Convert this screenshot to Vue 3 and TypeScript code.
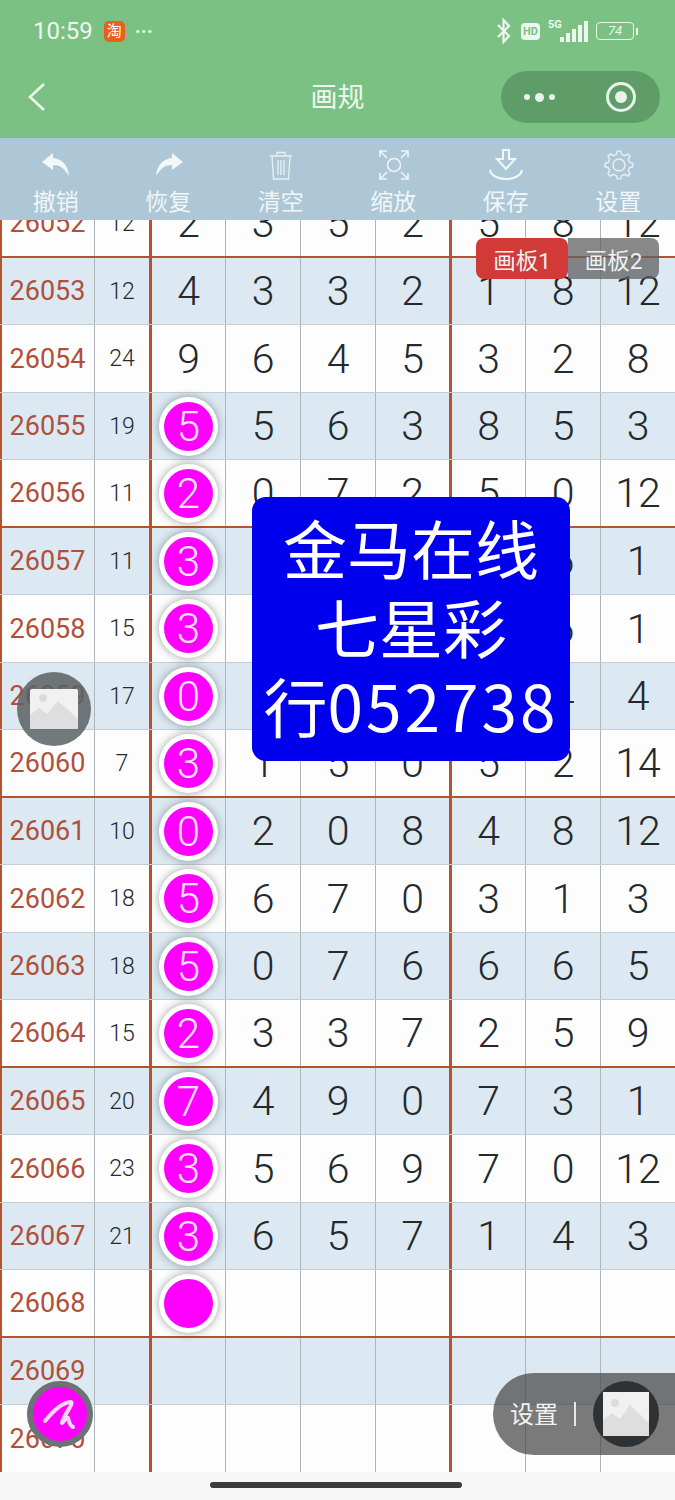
<template>
  <div class="page">
    <header class="top">
      <div class="status">
        <span class="time">10:59</span>
        <span class="tao">淘</span>
        <span class="more">···</span>
        <div class="status-right">
          <svg class="bt" width="16" height="26" viewBox="0 0 16 26" fill="none" stroke="#eef7ef" stroke-width="2.2">
            <path d="M2 7l11 11-5.5 6V2L13 8 2 19" />
          </svg>
          <span class="hd">HD</span>
          <span class="five">5G</span>
          <span class="bars">
            <i v-for="h in signal" :key="h" :style="{ height: h + 'px' }"></i>
          </span>
          <span class="battery">74</span>
          <span class="nub"></span>
        </div>
      </div>
      <div class="nav">
        <svg class="back" width="20" height="30" viewBox="0 0 20 30" fill="none" stroke="#eef7ef" stroke-width="2.6">
          <path d="M17 2L3 15l14 13" />
        </svg>
        <span class="title">画规</span>
        <div class="capsule">
          <span class="dots"><i></i><i class="big"></i><i></i></span>
          <span class="target"><i></i></span>
        </div>
      </div>
    </header>

    <nav class="tools">
      <div class="tool">
        <svg width="30" height="30" viewBox="0 0 30 30" fill="#f2f7fa">
          <path d="M12 3L1 12l11 8v-5c7 0 11 3 16 11-1-11-7-17-16-18z" />
        </svg>
        <span>撤销</span>
      </div>
      <div class="tool">
        <svg width="30" height="30" viewBox="0 0 30 30" fill="#f2f7fa">
          <path d="M18 3l11 9-11 8v-5c-7 0-11 3-16 11 1-11 7-17 16-18z" />
        </svg>
        <span>恢复</span>
      </div>
      <div class="tool">
        <svg width="30" height="30" viewBox="0 0 30 30" fill="none" stroke="#e9f1f5" stroke-width="1.3">
          <path d="M4 6h22M11 6V2.500h8V6M6 6l1.500 23h15L24 6M12 10v15M15 10v15M18 10v15" />
        </svg>
        <span>清空</span>
      </div>
      <div class="tool">
        <svg width="30" height="30" viewBox="0 0 30 30" fill="none" stroke="#eef4f7" stroke-width="1.6">
          <circle cx="15" cy="15" r="6.500" />
          <path d="M1 7V1h7M1 1l7 7M29 7V1h-7M29 1l-7 7M1 23v6h7M1 29l7-7M29 23v6h-7M29 29l-7-7" />
        </svg>
        <span>缩放</span>
      </div>
      <div class="tool">
        <svg width="36" height="32" viewBox="0 0 36 32" fill="none" stroke="#f2f7fa" stroke-width="2">
          <path d="M15 1h6v9h6l-9 10-9-10h6zM2 21c2 12 30 12 32 0" />
        </svg>
        <span>保存</span>
      </div>
      <div class="tool">
        <svg width="30" height="30" viewBox="0 0 30 30" fill="none" stroke="#e9f1f5" stroke-width="1.4">
          <path :d="gear" />
          <circle cx="15" cy="15" r="6" />
        </svg>
        <span>设置</span>
      </div>
    </nav>

    <main class="sheet">
      <div class="table">
        <div
          v-for="(row, i) in rows"
          :key="row.id"
          class="row"
          :class="{ tint: i % 2 === 1, heavy: i % 4 === 0 }"
        >
          <div class="cell issue">{{ row.id }}</div>
          <div class="cell sum">{{ row.sum }}</div>
          <div class="cell num">
            <span v-if="row.ball !== null" class="ball">{{ row.ball }}</span>
            <template v-else>{{ row.first }}</template>
          </div>
          <div
            v-for="(n, j) in row.nums"
            :key="j"
            class="cell num"
            :class="{ split: j === 2 }"
          >{{ n }}</div>
        </div>
      </div>
    </main>

    <footer class="foot"><i></i></footer>

    <!-- floating stuff over the sheet -->
    <div class="tabs">
      <span class="tab on">画板1</span>
      <span class="tab">画板2</span>
    </div>

    <div class="notice">
      <div>金马在线</div>
      <div>七星彩</div>
      <div>行<span class="code">052738</span></div>
    </div>

    <div class="float-pic">
      <svg width="48" height="40" viewBox="0 0 48 40">
        <rect width="48" height="40" rx="2" fill="#f1f1f1" />
        <path d="M0 40V26l9-7 8 6 11-13 20 18v10z" fill="#dedede" />
        <circle cx="13" cy="9" r="4" fill="#dcdcdc" />
      </svg>
    </div>

    <div class="float-pen">
      <svg width="40" height="40" viewBox="0 0 40 40" fill="none" stroke="#f7d9f7" stroke-width="4" stroke-linecap="round" stroke-linejoin="round">
        <path d="M5 27C14 16 24 8 31 8c3 2-7 12-9 21 2-1 4-7 6-5 1 4 2 8 5 9" />
      </svg>
    </div>

    <div class="float-set">
      <span class="set-label">设置</span>
      <span class="set-bar"></span>
      <span class="set-pic">
        <svg width="46" height="44" viewBox="0 0 46 44">
          <rect width="46" height="44" fill="#f1f1f1" />
          <path d="M0 44V28l9-7 8 6 10-14 19 18v13z" fill="#dedede" />
          <circle cx="12" cy="11" r="4" fill="#dcdcdc" />
        </svg>
      </span>
    </div>
  </div>
</template>

<script setup lang="ts">
interface Row {
  id: number;
  sum: number | string;
  first: number | string;
  ball: number | string | null;
  nums: (number | string)[];
}

const signal = [5, 9, 13, 17, 21];

function makeRow(id: number, sum: number | string, first: number | string, ball: number | string | null, nums: (number | string)[]): Row {
  return { id, sum, first, ball, nums };
}

const blank = ["", "", "", "", "", ""];

const rows: Row[] = [
  makeRow(26052, 12, 2, null, [3, 5, 2, 5, 8, 12]),
  makeRow(26053, 12, 4, null, [3, 3, 2, 1, 8, 12]),
  makeRow(26054, 24, 9, null, [6, 4, 5, 3, 2, 8]),
  makeRow(26055, 19, "", 5, [5, 6, 3, 8, 5, 3]),
  makeRow(26056, 11, "", 2, [0, 7, 2, 5, 0, 12]),
  makeRow(26057, 11, "", 3, [4, 2, 9, 3, 6, 1]),
  makeRow(26058, 15, "", 3, [1, 8, 4, 7, 6, 1]),
  makeRow(26059, 17, "", 0, [2, 5, 7, 1, 4, 4]),
  makeRow(26060, 7, "", 3, [1, 5, 0, 5, 2, 14]),
  makeRow(26061, 10, "", 0, [2, 0, 8, 4, 8, 12]),
  makeRow(26062, 18, "", 5, [6, 7, 0, 3, 1, 3]),
  makeRow(26063, 18, "", 5, [0, 7, 6, 6, 6, 5]),
  makeRow(26064, 15, "", 2, [3, 3, 7, 2, 5, 9]),
  makeRow(26065, 20, "", 7, [4, 9, 0, 7, 3, 1]),
  makeRow(26066, 23, "", 3, [5, 6, 9, 7, 0, 12]),
  makeRow(26067, 21, "", 3, [6, 5, 7, 1, 4, 3]),
  makeRow(26068, "", "", "", blank),
  makeRow(26069, "", "", null, blank),
  makeRow(26070, "", "", null, blank),
];

// 齿轮外圈
function gearPath(teeth: number, outer: number, inner: number) {
  const pts: string[] = [];
  const step = (Math.PI * 2) / teeth;
  for (let t = 0; t < teeth; t++) {
    const a = t * step - Math.PI / 2;
    const corners: [number, number][] = [
      [a - step * 0.3, inner],
      [a - step * 0.16, outer],
      [a + step * 0.16, outer],
      [a + step * 0.3, inner],
    ];
    for (const [ang, r] of corners) {
      pts.push(`${(15 + Math.cos(ang) * r).toFixed(2)} ${(15 + Math.sin(ang) * r).toFixed(2)}`);
    }
  }
  return `M${pts.join("L")}Z`;
}

const gear = gearPath(8, 14, 11);
</script>

<style>
html,
body {
  margin: 0;
  background: #f7f7f7;
}
</style>

<style scoped>
.page {
  position: relative;
  width: 675px;
  height: 1500px;
  overflow: hidden;
  display: flex;
  flex-direction: column;
  font-family: Roboto, "Noto Sans CJK SC", sans-serif;
  background: #f7f7f7;
}

.top {
  height: 138px;
  flex: none;
  background: #7bc184;
  color: #eef7ef;
}
.status {
  height: 62px;
  display: flex;
  align-items: center;
  padding-left: 33px;
  padding-right: 37px;
}
.time {
  font-size: 24px;
}
.tao {
  margin-left: 11px;
  width: 21px;
  height: 21px;
  border-radius: 5px;
  background: #e8601c;
  color: #fff;
  font-size: 15px;
  line-height: 21px;
  text-align: center;
}
.more {
  margin-left: 10px;
  font-size: 20px;
  font-weight: 700;
}
.status-right {
  margin-left: auto;
  display: flex;
  align-items: center;
}
.hd {
  margin-left: 9px;
  width: 19px;
  height: 17px;
  border-radius: 4px;
  background: #eef7ef;
  color: #7bc184;
  font-size: 11px;
  font-weight: 700;
  line-height: 17px;
  text-align: center;
}
.five {
  margin-left: 8px;
  margin-top: -14px;
  width: 12px;
  font-size: 11px;
  font-weight: 700;
  white-space: nowrap;
}
.bars {
  display: flex;
  align-items: flex-end;
  gap: 2px;
  height: 21px;
}
.bars i {
  display: block;
  width: 4px;
  background: #eef7ef;
}
.battery {
  margin-left: 8px;
  width: 36px;
  height: 16px;
  border: 1.500px solid #eef7ef;
  border-radius: 4px;
  font-size: 13px;
  font-style: italic;
  line-height: 16px;
  text-align: center;
}
.nub {
  margin-left: 2px;
  width: 2px;
  height: 7px;
  background: #eef7ef;
}

.nav {
  height: 76px;
  display: flex;
  align-items: center;
  position: relative;
  padding-left: 27px;
  padding-right: 15px;
}
.back {
  margin-top: -6px;
}
.title {
  position: absolute;
  left: 0;
  right: 0;
  top: 16px;
  text-align: center;
  font-size: 27px;
  line-height: 40px;
}
.capsule {
  margin-left: auto;
  margin-top: -6px;
  width: 159px;
  height: 52px;
  border-radius: 26px;
  background: #5f9d68;
  display: flex;
  align-items: center;
}
.dots {
  margin-left: 23px;
  display: flex;
  align-items: center;
  gap: 5px;
}
.dots i {
  display: block;
  width: 6px;
  height: 6px;
  border-radius: 50%;
  background: #e8f4e9;
}
.dots i.big {
  width: 9px;
  height: 9px;
}
.target {
  margin-left: auto;
  margin-right: 24px;
  width: 30px;
  height: 30px;
  box-sizing: border-box;
  border: 3px solid #e8f4e9;
  border-radius: 50%;
  display: flex;
  align-items: center;
  justify-content: center;
}
.target i {
  display: block;
  width: 12px;
  height: 12px;
  border-radius: 50%;
  background: #e8f4e9;
}

.tools {
  height: 82px;
  flex: none;
  background: #adc7d6;
  display: grid;
  grid-template-columns: repeat(6, 112.500px);
  position: relative;
  z-index: 1;
}
.tool {
  display: flex;
  flex-direction: column;
  align-items: center;
  padding-top: 11px;
  color: #f1f6f8;
  font-size: 23px;
}
.tool svg {
  height: 32px;
}
.tool span {
  margin-top: 5px;
  margin-right: 1px;
  line-height: 34px;
}

.sheet {
  height: 1252px;
  flex: none;
  overflow: hidden;
}
.table {
  margin-top: -30px;
  background: #fdfdfd;
}
.row {
  height: 67.500px;
  box-sizing: border-box;
  display: grid;
  grid-template-columns: 95px 57px 74px 75px 75px 76px 74px 75px 75px;
  border-bottom: 1px solid #c3cdd3;
  background: #fdfdfd;
}
.row.tint {
  background: #dce9f2;
}
.row.heavy {
  border-bottom: 2px solid #b5532f;
}
.cell {
  box-sizing: border-box;
  display: flex;
  align-items: center;
  justify-content: center;
  padding-top: 1px;
  border-right: 1px solid #adb5b8;
  color: #23292d;
}
.issue {
  border-left: 2px solid #b5532f;
  padding-right: 1px;
  color: #b0503a;
  font-size: 27px;
}
.sum {
  border-right: 3px solid #b5532f;
  font-size: 23px;
  font-weight: 350;
}
.num {
  font-size: 41px;
  font-weight: 350;
}
.num.split {
  border-right: 3px solid #b5532f;
}
.ball {
  width: 59px;
  height: 59px;
  box-sizing: border-box;
  border: 5px solid #fff;
  border-radius: 50%;
  background: #f0f;
  color: #fbe4fb;
  box-shadow: 0 0 8px rgba(40, 50, 50, 0.45);
  display: flex;
  align-items: center;
  justify-content: center;
  font-size: 42px;
  font-weight: 300;
}

.foot {
  flex: 1;
  position: relative;
  background: #f7f7f7;
}
.foot i {
  position: absolute;
  left: 210px;
  top: 10px;
  width: 252px;
  height: 6px;
  border-radius: 3px;
  background: #3c3c3c;
}

.tabs {
  position: absolute;
  left: 476px;
  top: 238px;
  display: flex;
  z-index: 2;
}
.tab {
  width: 91px;
  height: 41px;
  border-radius: 0 8px 8px 0;
  background: rgba(96, 96, 96, 0.75);
  color: #f2f2f2;
  font-size: 22.500px;
  line-height: 47px;
  text-align: center;
}
.tab.on {
  width: 92px;
  border-radius: 8px;
  background: #d13a37;
}

.notice {
  position: absolute;
  left: 252px;
  top: 497px;
  width: 318px;
  height: 264px;
  box-sizing: border-box;
  padding-top: 10px;
  border-radius: 14px;
  background: #0000ec;
  color: #fff;
  font-family: "Noto Sans CJK SC", sans-serif;
  font-size: 64px;
  line-height: 79px;
  text-align: center;
  white-space: nowrap;
  z-index: 2;
}
.code {
  letter-spacing: 3px;
}

.float-pic {
  position: absolute;
  left: 17px;
  top: 672px;
  width: 74px;
  height: 74px;
  border-radius: 50%;
  background: rgba(90, 96, 100, 0.85);
  display: flex;
  align-items: center;
  justify-content: center;
  z-index: 2;
}
.float-pen {
  position: absolute;
  left: 27px;
  top: 1381px;
  width: 66px;
  height: 66px;
  box-sizing: border-box;
  border: 6px solid #6e7276;
  border-radius: 50%;
  background: #f0f;
  display: flex;
  align-items: center;
  justify-content: center;
  z-index: 2;
}
.float-set {
  position: absolute;
  left: 493px;
  top: 1373px;
  width: 182px;
  height: 82px;
  border-radius: 41px 0 0 41px;
  background: rgba(70, 70, 70, 0.72);
  display: flex;
  align-items: center;
  color: #f2f2f2;
  font-size: 24px;
  z-index: 2;
}
.set-label {
  margin-left: 17px;
  margin-top: -3px;
}
.set-bar {
  margin-left: 16px;
  width: 2px;
  height: 24px;
  background: #e8e8e8;
}
.set-pic {
  margin-left: 17px;
  width: 66px;
  height: 66px;
  border-radius: 50%;
  background: #2e3235;
  display: flex;
  align-items: center;
  justify-content: center;
}
</style>
